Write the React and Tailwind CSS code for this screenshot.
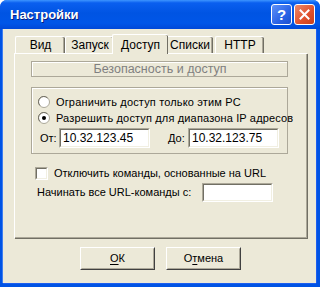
import { useState } from "react";

const font = "font-['Liberation_Sans',Arial,sans-serif]";

function Sunken({ className = "", children }) {
  return (
    <div className={`border border-t-[#aca899] border-l-[#aca899] border-b-white border-r-white ${className}`}>
      <div className="h-full w-full border border-t-[#716f64] border-l-[#716f64] border-b-[#f1efe2] border-r-[#f1efe2] bg-white">
        {children}
      </div>
    </div>
  );
}

function TextBox({ value, className }) {
  return (
    <Sunken className={className}>
      <div className="flex h-full items-center px-[2px] text-[12px] leading-none text-black">{value}</div>
    </Sunken>
  );
}

function Radio({ checked }) {
  return (
    <svg width="12" height="12" viewBox="0 0 12 12" className="shrink-0">
      <circle cx="6" cy="6" r="5.5" fill="#fff" stroke="#aca899" />
      <path d="M2 9.5 A5 5 0 0 1 9.5 2" fill="none" stroke="#716f64" strokeWidth="1" />
      {checked && <circle cx="6" cy="6" r="2" fill="#000" />}
    </svg>
  );
}

function Etched({ className = "", children }) {
  return (
    <div className={`border border-[#aca899] ${className}`}>
      <div className="h-full border-l border-t border-white">{children}</div>
    </div>
  );
}

function Tab({ label, active, width }) {
  if (active) {
    return (
      <div
        className={`relative z-10 -mx-[2px] -mb-[1px] flex h-[20px] items-center justify-center rounded-t-[2px] border-l border-t border-white bg-[#ece9d8] shadow-[inset_-1px_0_0_#716f64] ${width}`}
      >
        <span className="text-[12px]">{label}</span>
      </div>
    );
  }
  return (
    <div
      className={`flex h-[17px] items-center justify-center rounded-t-[2px] border-l border-t border-white bg-[#ece9d8] shadow-[inset_-1px_0_0_#716f64,inset_-2px_0_0_#aca899] ${width}`}
    >
      <span className="text-[12px]">{label}</span>
    </div>
  );
}

function Button({ children }) {
  return (
    <div className="h-[23px] w-[75px] border border-b-[#404040] border-r-[#404040] border-l-white border-t-white">
      <div className="flex h-full items-center justify-center border border-b-[#aca899] border-r-[#aca899] border-l-[#ece9d8] border-t-[#ece9d8] text-[11px]">
        {children}
      </div>
    </div>
  );
}

export default function App() {
  const [mode] = useState("range");

  return (
    <div className={`h-[287px] w-[320px] ${font} text-black`}>
      <div className="flex h-full flex-col rounded-t-[7px] bg-[#0053e4]">
        {/* title bar */}
        <div className="flex h-[29px] items-center rounded-t-[7px] bg-[linear-gradient(to_bottom,#3d95ff_0%,#0a5fef_10%,#0054e3_45%,#0056e8_80%,#0048d8_100%)] pl-[10px] pr-[5px]">
          <span className="text-[13px] font-bold text-white [text-shadow:1px_1px_0_#0a1e7a]">Настройки</span>
          <div className="ml-auto flex gap-[2px]">
            <div className="flex h-[21px] w-[21px] items-center justify-center rounded-[3px] border border-white bg-[linear-gradient(135deg,#5f92f8,#2a63e6_60%,#1a4fd0)]">
              <span className="text-[15px] font-bold leading-none text-white">?</span>
            </div>
            <div className="flex h-[21px] w-[21px] items-center justify-center rounded-[3px] border border-white bg-[linear-gradient(135deg,#eb8a6c,#e0502c_60%,#c8401c)]">
              <svg width="11" height="11" viewBox="0 0 11 11">
                <path d="M1.5 1.5 L9.5 9.5 M9.5 1.5 L1.5 9.5" stroke="#fff" strokeWidth="2" strokeLinecap="square" />
              </svg>
            </div>
          </div>
        </div>

        {/* body */}
        <div className="mb-[4px] ml-[3px] mr-[4px] flex flex-1 flex-col bg-[#ece9d8] shadow-[-1px_0_0_#3d7df0,1px_0_0_#1c5ef0,0_1px_0_#1c5ef0]">
          {/* tabs */}
          <div className="ml-[12px] mt-[5px] flex h-[19px] items-end">
            <Tab label="Вид" width="w-[50px]" />
            <Tab label="Запуск" width="w-[49px]" />
            <Tab label="Доступ" width="w-[56px]" active />
            <Tab label="Списки" width="w-[47px]" />
            <div className="w-[2px]" />
            <Tab label="HTTP" width="w-[49px]" />
          </div>

          {/* panel */}
          <div className="ml-[11px] h-[185px] w-[293px] border-l border-t border-white shadow-[inset_-1px_-1px_0_#aca899,1px_1px_0_#716f64]">
            <div className="whitespace-nowrap pl-[16px] pt-[7px] text-[11px]">
              <Etched className="h-[16px] w-[257px]">
                <div className="flex h-full items-center justify-center text-[12.5px] leading-none text-[#808080]">
                  Безопасность и доступ
                </div>
              </Etched>

              <Etched className="mt-[10px] h-[67px] w-[257px]">
                <div className="pl-[5px] pt-[6px]">
                  <div className="flex h-[14px] items-center gap-[6px]">
                    <Radio checked={mode === "local"} />
                    <span className="leading-none tracking-[0.15px]">Ограничить доступ только этим PC</span>
                  </div>
                  <div className="mt-[2px] flex h-[14px] items-center gap-[6px]">
                    <Radio checked={mode === "range"} />
                    <span className="leading-none tracking-[0.15px]">Разрешить доступ для диапазона IP адресов</span>
                  </div>
                  <div className="mt-[3px] flex items-center pl-[2px]">
                    <span className="w-[19px]">От:</span>
                    <TextBox value="10.32.123.45" className="h-[20px] w-[91px]" />
                    <span className="ml-[18px] w-[20px]">До:</span>
                    <TextBox value="10.32.123.75" className="h-[20px] w-[91px]" />
                  </div>
                </div>
              </Etched>

              <div className="mt-[13px] flex items-center gap-[6px] pl-[4px]">
                <Sunken className="h-[13px] w-[13px]" />
                <span className="leading-none">Отключить команды, основанные на URL</span>
              </div>

              <div className="mt-[3px] flex items-center pl-[6px]">
                <span className="w-[165px]">Начинать все URL-команды с:</span>
                <TextBox value="" className="h-[19px] w-[71px]" />
              </div>
            </div>
          </div>

          {/* buttons */}
          <div className="mt-[9px] flex gap-[11px] pl-[77px]">
            <Button>
              <span>
                <span className="underline underline-offset-2">О</span>К
              </span>
            </Button>
            <Button>
              <span>
                О<span className="underline underline-offset-2">т</span>мена
              </span>
            </Button>
          </div>
        </div>
      </div>
    </div>
  );
}
